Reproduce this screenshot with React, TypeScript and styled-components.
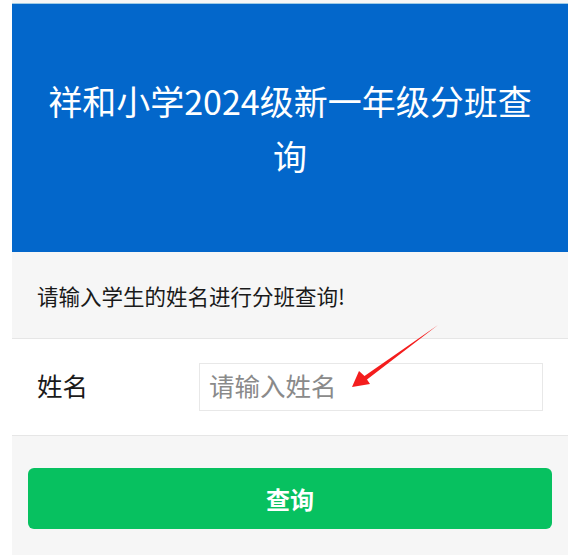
import styled, { createGlobalStyle } from "styled-components";

const GlobalStyle = createGlobalStyle`
  html, body {
    margin: 0;
    padding: 0;
    background: #ffffff;
    font-family: "Noto Sans CJK SC", "Noto Sans", sans-serif;
  }
`;

const Page = styled.div`
  position: relative;
  width: 556px;
  margin-left: 12px;
  padding-top: 3px;
  background: #f6f6f6;
`;

const Header = styled.header`
  background: #0367cb;
  border-top: 1px solid #9fcbe6;
  padding: 69px 26px 69px;
`;

const Title = styled.h1`
  margin: 0;
  color: #ffffff;
  font-size: 34px;
  font-weight: normal;
  line-height: 55px;
  text-align: center;
`;

const Notice = styled.div`
  height: 86px;
  display: flex;
  align-items: center;
  padding-left: 25px;
  font-size: 21.5px;
  color: #1a1a1a;
`;

const FormRow = styled.div`
  height: 96px;
  display: flex;
  align-items: center;
  padding: 0 25px;
  background: #ffffff;
  border-top: 1px solid #e6e6e6;
  border-bottom: 1px solid #e6e6e6;
`;

const Label = styled.label`
  width: 162px;
  flex-shrink: 0;
  padding-bottom: 5px;
  font-size: 25.5px;
  color: #1a1a1a;
`;

const NameInput = styled.input`
  box-sizing: border-box;
  width: 344px;
  height: 48px;
  padding: 0 9px 5px;
  border: 1px solid #e8e8e8;
  outline: none;
  font-family: inherit;
  font-size: 25.5px;
  color: #333333;

  &::placeholder {
    color: #8a8a8a;
  }
`;

const Actions = styled.div`
  padding: 32px 16px 30px;
`;

const SubmitButton = styled.button`
  display: block;
  width: 100%;
  height: 61px;
  border: none;
  border-radius: 6px;
  background: #07c160;
  color: #ffffff;
  font-family: inherit;
  font-size: 24px;
  font-weight: bold;
  cursor: pointer;
`;

const Arrow = styled.svg`
  position: absolute;
  left: 333px;
  top: 320px;
  pointer-events: none;
`;

export default function App() {
  return (
    <>
      <GlobalStyle />
      <Page>
        <Header>
          <Title>祥和小学2024级新一年级分班查询</Title>
        </Header>
        <Notice>请输入学生的姓名进行分班查询!</Notice>
        <FormRow>
          <Label htmlFor="name">姓名</Label>
          <NameInput id="name" placeholder="请输入姓名" />
        </FormRow>
        <Actions>
          <SubmitButton>查询</SubmitButton>
        </Actions>
        <Arrow width="100" height="72" viewBox="0 0 100 72">
          <polygon
            points="7,67 14,51 19.5,56 93,5 22,59.5 25,64"
            fill="#f41d1d"
          />
        </Arrow>
      </Page>
    </>
  );
}
